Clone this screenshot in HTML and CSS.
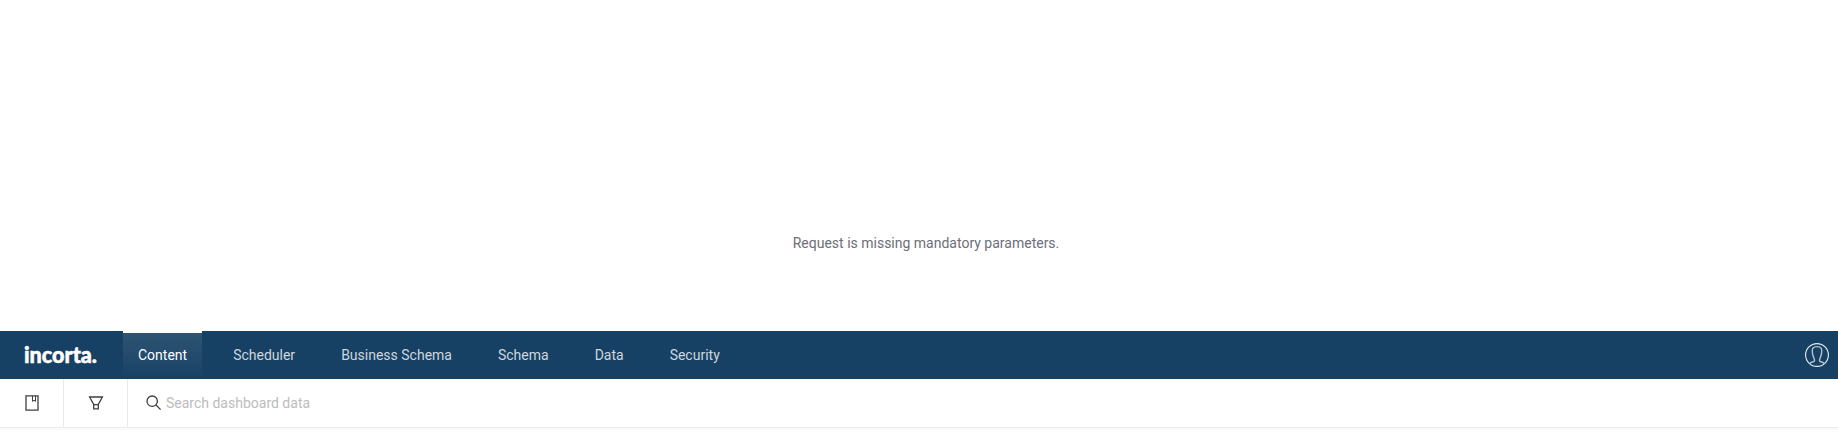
FILE: index.html
```html
<!DOCTYPE html>
<html lang="en">
<head>
<meta charset="utf-8">
<title>Incorta</title>
<link rel="stylesheet" href="styles.css">
</head>
<body>
<main class="message"><p class="message-text">Request is missing mandatory parameters.</p></main>
<header class="navbar">
  <a class="brand" aria-label="incorta">
    <svg class="logo" width="76" height="36" viewBox="0 0 76 36"><text class="wordmark" x="0" y="25.6" textLength="73" lengthAdjust="spacingAndGlyphs">incorta.</text></svg>
  </a>
  <nav class="tabs">
    <a class="tab active">Content</a>
    <a class="tab">Scheduler</a>
    <a class="tab">Business Schema</a>
    <a class="tab">Schema</a>
    <a class="tab">Data</a>
    <a class="tab">Security</a>
  </nav>
  <svg class="avatar" width="24" height="24" viewBox="0 0 24 24">
    <circle class="ring" cx="12" cy="12" r="11.4"/>
    <path class="person" d="M4.8 20.6C5.8 18.8 9.3 19.2 9.5 17.6C9.7 15.8 8.4 14.6 7.8 12C7.2 9.3 6.8 6.8 7.9 5.2C8.8 3.8 10.3 3.6 12 3.6S15.2 3.8 16.1 5.2C17.2 6.8 16.8 9.3 16.2 12C15.6 14.6 14.3 15.8 14.5 17.6C14.7 19.2 18.2 18.8 19.2 20.6"/>
  </svg>
</header>
<section class="toolbar">
  <button class="tool" aria-label="Bookmarks"><svg class="icon" width="14" height="16" viewBox="0 0 14 16"><path d="M1 .8H13V15.2H1Z"/><path class="ribbon" d="M7.5 1V6.4L9 5.2L10.5 6.4V1"/></svg></button>
  <button class="tool" aria-label="Filters"><svg class="icon" width="16" height="14" viewBox="0 0 16 14"><path d="M1.6 1H14.4L10.3 8.4V12.8H5.7V8.4ZM5.7 8.6H10.3"/></svg></button>
  <label class="search">
    <svg class="icon search-icon" width="16" height="16" viewBox="0 0 16 16"><circle cx="6.2" cy="6.2" r="5.2"/><path d="M10 10L14.6 14.6"/></svg>
    <span class="placeholder">Search dashboard data</span>
  </label>
</section>
</body>
</html>
```
FILE: styles.css
```css
body {
  margin: 0;
  height: 448px;
  overflow: hidden;
  background: #fff;
  font-family: Roboto, sans-serif;
  font-size: 14px;
}
.message {
  height: 331px;
  display: flex;
  justify-content: center;
  box-sizing: border-box;
  padding: 234px 0 0 14px;
}
.message-text {
  margin: 0;
  line-height: 18px;
  color: #6d6e78;
}
.navbar {
  height: 48px;
  display: flex;
  align-items: center;
  background: #174164;
}
.brand {
  width: 99px;
  padding-left: 24px;
  display: flex;
}
.logo {
  display: block;
  overflow: visible;
}
.wordmark {
  font: 900 22px Lato, sans-serif;
  fill: #fff;
  stroke: #fff;
  stroke-width: 0.5;
}
.tabs {
  height: 48px;
  display: flex;
  gap: 16px;
  flex: 1;
}
.tab {
  box-sizing: border-box;
  height: 48px;
  padding: 0 15px;
  border-top: 2px solid transparent;
  line-height: 45px;
  color: #cdd6dd;
}
.tab.active {
  border-top-color: #fff;
  color: #fff;
  background: linear-gradient(#2f5474, #174164) padding-box;
}
.avatar {
  margin-right: 9px;
  fill: none;
}
.ring {
  stroke: #e8edf1;
  stroke-width: 1.1;
}
.person {
  stroke: #b4c2cd;
  stroke-width: 1.4;
}
.toolbar {
  height: 48px;
  display: flex;
  border-bottom: 1px solid #ececec;
  box-shadow: 0 1px 2px rgba(0, 0, 0, 0.04);
}
.tool {
  box-sizing: border-box;
  width: 64px;
  padding: 0;
  border: 0;
  border-right: 1px solid #e8e8e8;
  background: none;
  display: flex;
  align-items: center;
  justify-content: center;
}
.icon {
  fill: none;
  stroke: #3c3f42;
  stroke-width: 1.3;
}
.ribbon {
  stroke-width: 1;
}
.search {
  display: flex;
  align-items: center;
  padding-left: 17.5px;
}
.search-icon {
  margin-right: 4.5px;
}
.placeholder {
  color: #bcbcbc;
}
```
